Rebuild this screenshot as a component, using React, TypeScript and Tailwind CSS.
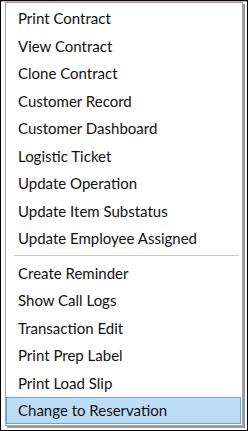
import React from "react";

const groupA = [
  "Print Contract",
  "View Contract",
  "Clone Contract",
  "Customer Record",
  "Customer Dashboard",
  "Logistic Ticket",
  "Update Operation",
  "Update Item Substatus",
  "Update Employee Assigned",
];
const groupB = [
  "Create Reminder",
  "Show Call Logs",
  "Transaction Edit",
  "Print Prep Label",
  "Print Load Slip",
];

function Item({ label, active }: { label: string; active?: boolean }) {
  return (
    <div
      className={
        "h-[27.5px] flex items-center text-[15px] leading-none text-[#111] " +
        (active ? "bg-[#bcdcf4] border border-[#5fa6e8] pl-[11px]" : "pl-[12px]")
      }
    >
      {label}
    </div>
  );
}

export default function App() {
  return (
    <div
      className="w-[248px] h-[431px] border border-black bg-white overflow-hidden flex flex-col"
      style={{ fontFamily: 'Lato, "Noto Sans", sans-serif' }}
    >
      <div className="h-[1px] w-full bg-[#c9b89a]" />
      <div className="flex-1 pl-[4px]">
        <div className="w-[238px] border border-[#a0a0a0] bg-white shadow-[2px_2px_0_#9a9a9a] pt-[2px] pb-[1px] pr-[1px]">
          {groupA.map((l) => (
            <Item key={l} label={l} />
          ))}
          <div className="h-[6.75px] flex items-center pl-[8px] pr-[2px]">
            <div className="h-[1px] w-full bg-[#c8c8c8]" />
          </div>
          {groupB.map((l) => (
            <Item key={l} label={l} />
          ))}
          <Item label="Change to Reservation" active />
        </div>
      </div>
    </div>
  );
}
